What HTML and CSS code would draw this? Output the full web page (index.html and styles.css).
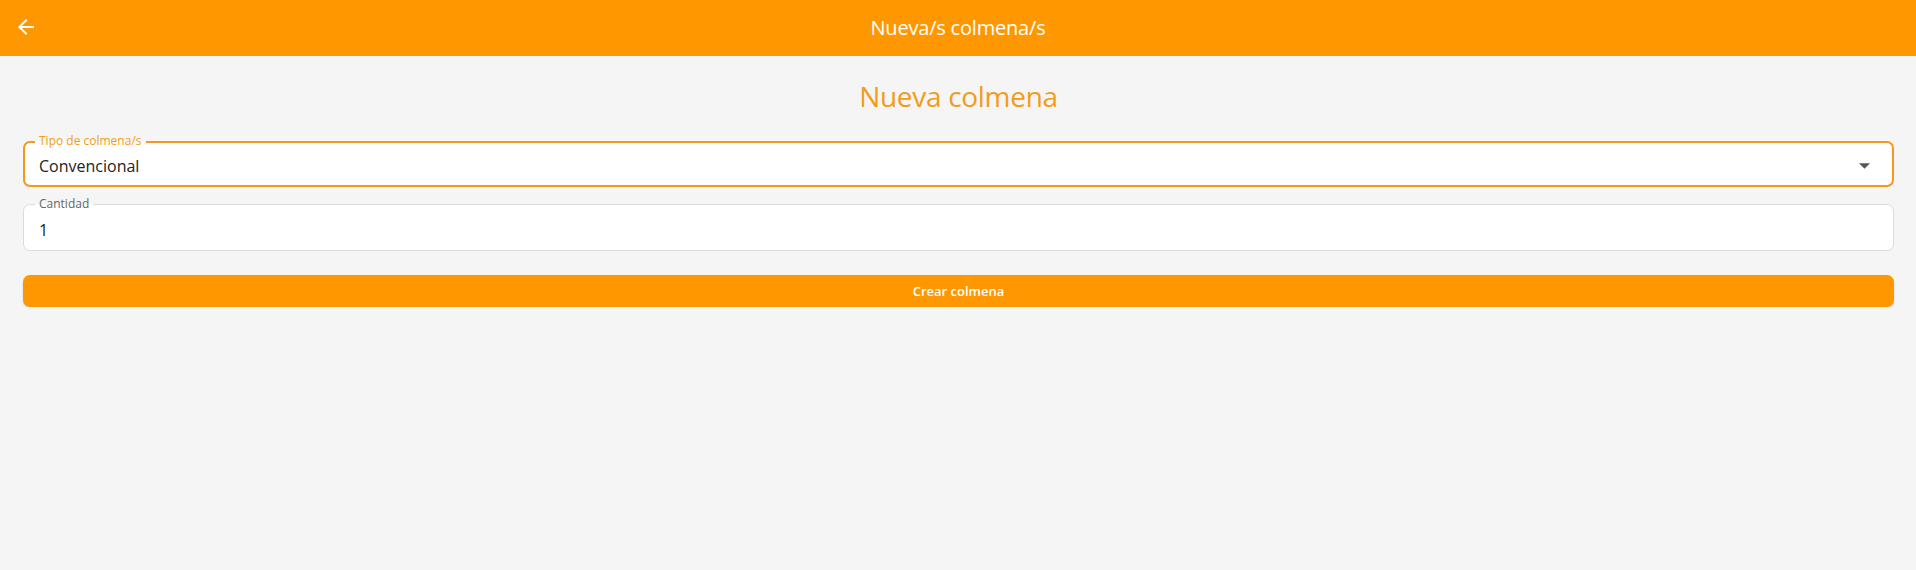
FILE: index.html
```html
<!DOCTYPE html>
<html lang="es">
<head>
    <meta charset="UTF-8">
    <meta name="viewport" content="width=device-width, initial-scale=1.0">
    <title>Nueva/s colmena/s</title>
    <link rel="stylesheet" href="styles.css">
</head>
<body>
    <header class="topbar">
        <button class="back-btn" aria-label="Volver">
            <svg width="24" height="24" viewBox="0 0 24 24"><path d="M20 11H7.83l5.59-5.59L12 4l-8 8 8 8 1.41-1.41L7.83 13H20v-2z" fill="#fff"/></svg>
        </button>
        <div class="topbar-title">Nueva/s colmena/s</div>
    </header>

    <main class="content">
        <h1 class="page-title">Nueva colmena</h1>

        <form class="hive-form">
            <div class="field field-focused">
                <span class="field-label">Tipo de colmena/s</span>
                <div class="field-value">Convencional</div>
                <svg class="caret" width="11" height="6" viewBox="0 0 10 5"><path d="M0 0h10L5 5z" fill="#555"/></svg>
            </div>

            <div class="field">
                <span class="field-label">Cantidad</span>
                <div class="field-value">1</div>
            </div>

            <button type="submit" class="submit-btn">Crear colmena</button>
        </form>
    </main>
</body>
</html>
```

FILE: styles.css
```css
body {
    margin: 0;
    background: #f5f5f5;
    font-family: "Open Sans", "Noto Sans", sans-serif;
    color: #222;
}

.topbar {
    height: 56px;
    background: #ff9800;
    display: flex;
    align-items: center;
    justify-content: center;
    position: relative;
}

.back-btn {
    position: absolute;
    left: 14px;
    top: 15px;
    background: none;
    border: none;
    padding: 0;
    width: 24px;
    height: 24px;
    cursor: pointer;
}

.topbar-title {
    color: #fff;
    font-size: 20px;
    letter-spacing: -0.2px;
    margin-top: -2px;
}

.content {
    padding: 20px 22px 0 23px;
}

.page-title {
    margin: 0 0 25px;
    text-align: center;
    font-weight: 400;
    font-size: 28px;
    color: #f39c1a;
    line-height: 40px;
    letter-spacing: -0.3px;
}

.hive-form {
    display: flex;
    flex-direction: column;
}

.field {
    position: relative;
    height: 47px;
    box-sizing: border-box;
    background: #fff;
    border: 1px solid #dcdcdc;
    border-radius: 7px;
    display: flex;
    align-items: center;
    padding: 4px 15px 0;
    margin-bottom: 17px;
}

.field-focused {
    height: 46px;
    border: 2px solid #f7971e;
    padding: 3px 14px 0;
}

.field-label {
    position: absolute;
    top: -8px;
    left: 11px;
    padding: 0 4px;
    font-size: 12px;
    line-height: 14px;
    color: #666;
    background: linear-gradient(#f5f5f5 50%, #fff 50%);
}

.field-focused .field-label {
    top: -9px;
    left: 10px;
    color: #f39c1a;
}

.field-value {
    font-size: 16px;
    color: #222;
    flex: 1;
}

.caret {
    margin-right: 8px;
}

.submit-btn {
    margin-top: 7px;
    height: 32px;
    border: none;
    border-radius: 7px;
    background: #ff9800;
    color: #fff;
    font-family: inherit;
    font-weight: 600;
    font-size: 13px;
    cursor: pointer;
    box-shadow: 0 1px 2px rgba(0, 0, 0, 0.15);
}
```
